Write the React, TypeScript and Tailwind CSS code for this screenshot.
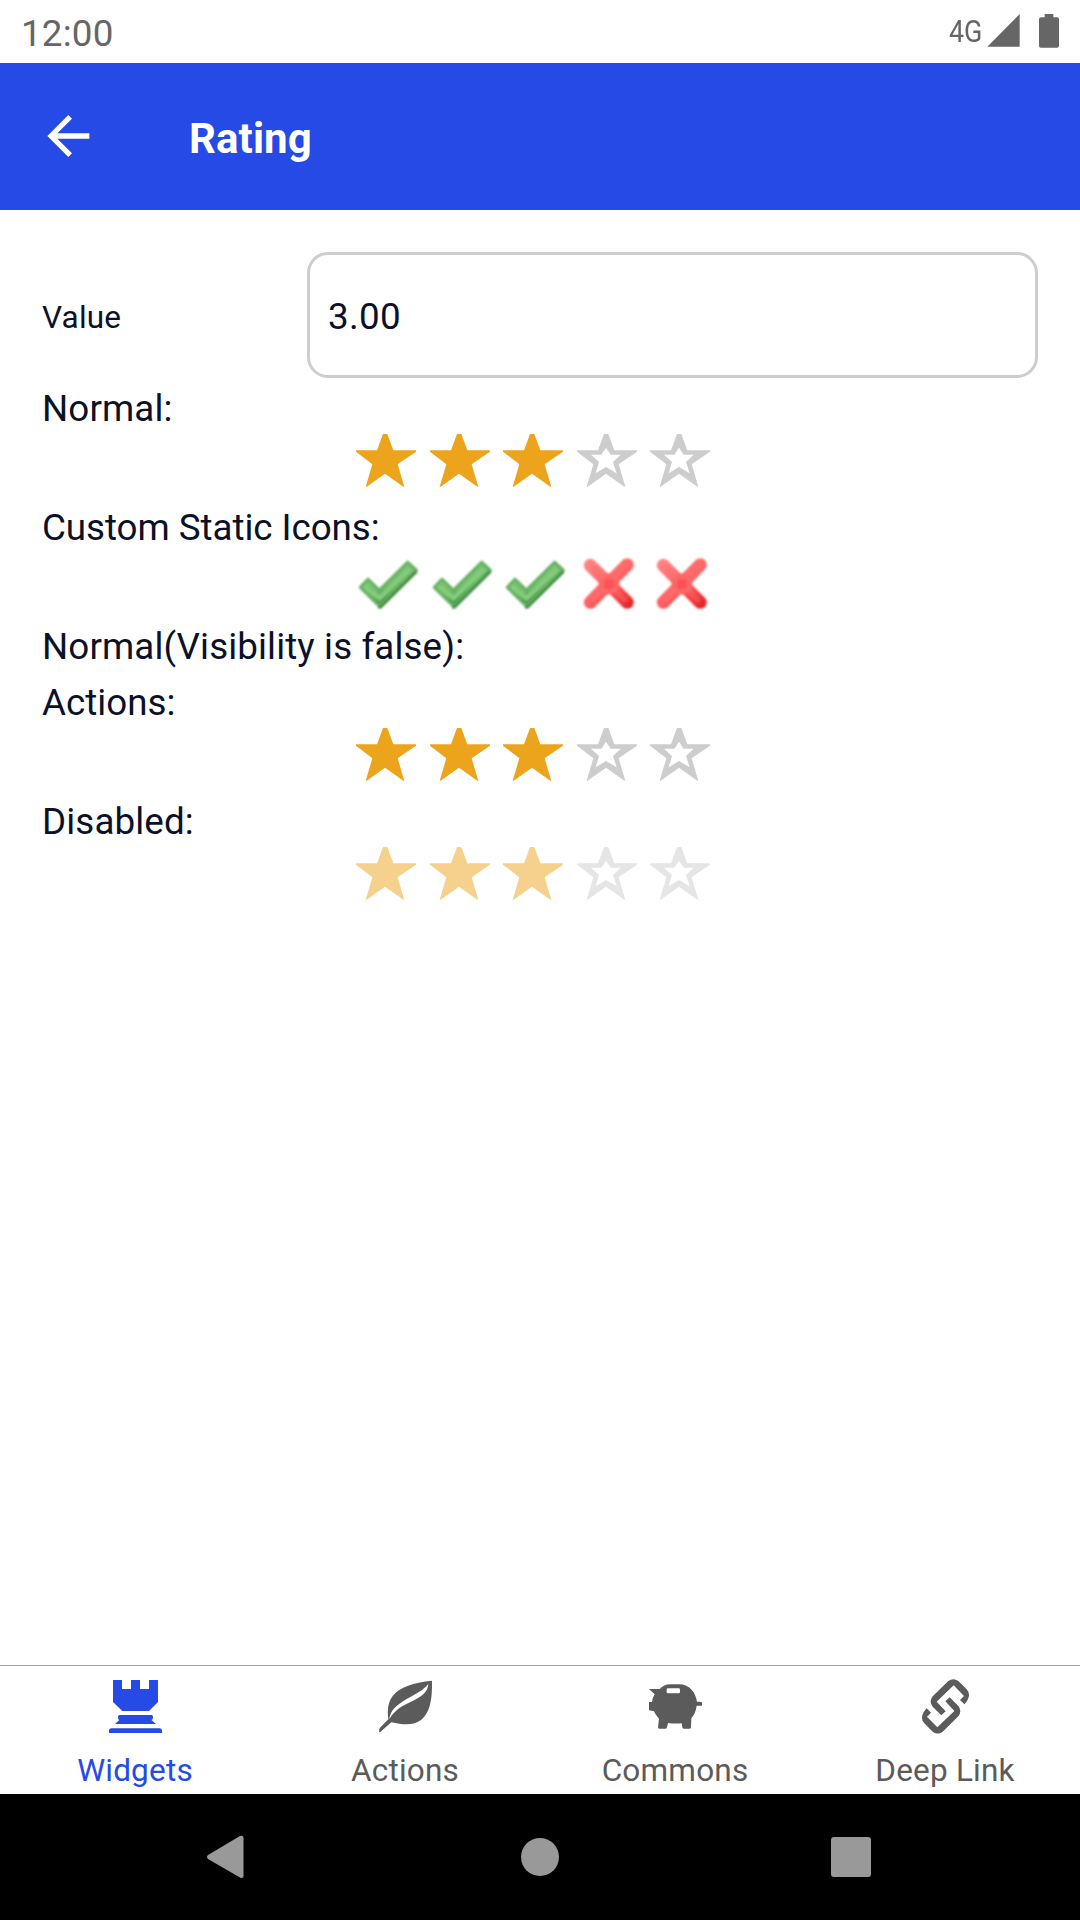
import React from 'react';

const STAR_OUTER = 'M81 0H94L112 49H180V53L125 91L145 158H142L87 119L32 158H29L49 91L0 53V49H63Z';
const STAR_HOLE = 'M87 41L101 62H131L108 84L119 118L87 99L56 118L66 84L42 62H73Z';
const LINK_HALF =
  'M1084 196L1058 170Q1046 156 1058 139L1105 93Q1120 82 1135 93L1160 118Q1177 137 1153 163L1140 150L1152 138L1121 106L1070 155L1097 184Z';

function Star({ filled }: { filled: boolean }) {
  return (
    <svg className="h-[53px] w-[60px]" viewBox="0 0 180 159" fill={filled ? '#eda41d' : '#cdcdcd'}>
      <path fillRule="evenodd" d={filled ? STAR_OUTER : STAR_OUTER + STAR_HOLE} />
    </svg>
  );
}

function Tick() {
  return (
    <svg className="h-[63px] w-[63px] blur-[1px]" viewBox="48 24 189 189">
      <defs>
        <linearGradient id="tick" x1="0.3" y1="0.3" x2="0.6" y2="0.8">
          <stop offset="0" stopColor="#7cc576" />
          <stop offset="0.55" stopColor="#74bd6d" />
          <stop offset="1" stopColor="#3f8f40" />
        </linearGradient>
      </defs>
      <path d="M60 127L84 102L118 135L203 51L230 76L120 186Z" fill="#66b062" stroke="#66b062" strokeWidth="8" strokeLinejoin="round" />
      <path d="M66 126L84 108L118 142L203 58L222 75L119 176Z" fill="url(#tick)" />
      <path d="M74 124L119 160L209 72" fill="none" stroke="#83cc7b" strokeWidth="14" />
      <path d="M114 187L122 187L230 80" fill="none" stroke="#3a853a" strokeWidth="7" />
    </svg>
  );
}

function Cross() {
  return (
    <svg className="h-[63px] w-[63px] blur-[1px]" viewBox="711 24 189 189">
      <defs>
        <linearGradient id="cross" gradientUnits="userSpaceOnUse" x1="750" y1="50" x2="860" y2="185">
          <stop offset="0" stopColor="#ff8383" />
          <stop offset="0.55" stopColor="#fd6263" />
          <stop offset="1" stopColor="#e8262a" />
        </linearGradient>
      </defs>
      <path d="M751 61L862 172M862 59L751 172" stroke="url(#cross)" strokeWidth="39" strokeLinecap="round" />
      <path d="M776 100L807 84L838 100V134L807 150L776 134Z" fill="#fd6667" />
      <path d="M754 64L859 169M859 62L754 169" stroke="#ff6e6e" strokeOpacity="0.4" strokeWidth="16" />
      <rect x="793" y="103" width="28" height="28" fill="#fb5154" />
    </svg>
  );
}

function Label({ children, tracking = '' }: { children: React.ReactNode; tracking?: string }) {
  return <p className={`h-14 pt-[9px] text-[36.75px] leading-[44px] whitespace-nowrap ${tracking}`}>{children}</p>;
}

function Rating({ custom = false, disabled = false }: { custom?: boolean; disabled?: boolean }) {
  return (
    <div className={`flex h-[63px] gap-[13.5px] pl-[314px] ${disabled ? 'opacity-50' : ''}`}>
      {[1, 2, 3, 4, 5].map((n) => (
        <div key={n} className="w-[60px] shrink-0">
          {custom ? <div className="w-[63px]">{n <= 3 ? <Tick /> : <Cross />}</div> : <Star filled={n <= 3} />}
        </div>
      ))}
    </div>
  );
}

function Tab({ label, color, viewBox, children }: { label: string; color: string; viewBox: string; children: React.ReactNode }) {
  return (
    <div className={`flex flex-1 flex-col items-center pt-[12px] ${color}`}>
      <svg className="h-[56px] w-[54px]" viewBox={viewBox} fill="currentColor">
        {children}
      </svg>
      <span className="mt-[18px] text-[31.5px] leading-[38px] tracking-[0.2px] whitespace-nowrap">{label}</span>
    </div>
  );
}

export default function App() {
  return (
    <div className="flex h-[1920px] w-[1080px] flex-col overflow-hidden bg-white font-['Roboto',sans-serif] text-[#0a1128]">
      <div className="flex h-[63px] shrink-0 items-start justify-between pl-[21px] text-[#666666]">
        <span className="pt-[12px] text-[36.75px] leading-[44px] tracking-[0.2px]">12:00</span>
        <div className="flex">
          <span className="w-[38px] origin-left scale-x-[0.84] pt-[12px] text-[32px] leading-[38px]">4G</span>
          <svg className="h-[63px] w-[93px]" viewBox="261 0 279 189" fill="currentColor">
            <path d="M262 140L359 42V140Z" />
            <path d="M434 42H460V52H471Q477 52 477 58V137Q477 143 471 143H423Q417 143 417 137V58Q417 52 423 52H434Z" />
          </svg>
        </div>
      </div>

      <header className="flex h-[147px] shrink-0 items-center bg-[#254ae6] pl-[47px] text-white">
        <svg className="mb-px h-[42px] w-[43px]" viewBox="142 346 129 126" fill="currentColor">
          <path d="M143 409L206 346L217 357L173 401H269V417H173L217 461L206 472Z" />
        </svg>
        <h1 className="ml-[99px] pt-[4px] text-[42px] leading-[50px] font-bold tracking-[0.1px]">Rating</h1>
      </header>

      <main className="flex-1 px-[42px] pt-[42px]">
        <div className="flex h-[126px] items-center">
          <span className="w-[265px] pt-[6px] text-[31.5px] tracking-[0.2px]">Value</span>
          <div className="flex h-full flex-1 items-center rounded-[21px] border-[3px] border-[#cdcdcd] pt-[3px] pl-[18px] text-[36.75px] tracking-[0.3px]">
            3.00
          </div>
        </div>
        <Label tracking="tracking-[0.12px]">Normal:</Label>
        <Rating />
        <Label tracking="tracking-[-0.05px]">Custom Static Icons:</Label>
        <Rating custom />
        <Label tracking="tracking-[0.12px]">Normal(Visibility is false):</Label>
        <Label>Actions:</Label>
        <Rating />
        <Label tracking="tracking-[0.12px]">Disabled:</Label>
        <Rating disabled />
      </main>

      <nav className="flex h-[129px] shrink-0 border-t border-[#a3a3a3]">
        <Tab label="Widgets" color="text-[#254ae6]" viewBox="144 84 162 168">
          <path d="M159 90H186V117H213V90H240V117H267V90H294V156L267 183H187L159 156Z" />
          <path d="M177 195H276Q279 196 279 203Q279 208 274 210L288 222H165L178 210Q174 208 174 203Q174 197 177 195Z" />
          <path d="M153 235H300Q306 236 306 241V249H147V241Q147 236 153 235Z" />
        </Tab>
        <Tab label="Actions" color="text-[#5b5b5b]" viewBox="954 84 162 168">
          <path
            fillRule="evenodd"
            d="M1116 92C1060 98 1020 110 998 138C984 156 981 180 985 208L960 233Q956 239 958 247Q961 247 965 242L994 217C1030 225 1062 228 1086 208C1110 184 1117 150 1116 92ZM988 207C990 182 1010 165 1040 147C1072 130 1090 120 1105 102C1104 124 1090 138 1050 157C1015 173 1004 184 988 207Z"
          />
        </Tab>
        <Tab label="Commons" color="text-[#5b5b5b]" viewBox="204 84 162 168">
          <path
            fillRule="evenodd"
            d="M207 117H239Q252 103 270 103H298C328 103 347 127 351 155H360V156H366V167H350C348 184 341 197 334 205L333 232Q333 236 329 236H311Q307 236 307 232L305 220Q284 222 264 219L261 232Q260 236 257 236H238Q234 236 234 232L237 206C230 199 226 192 222 184L207 181V156H216Q218 142 224 133ZM264 115Q260 115 260 119V126Q260 130 264 130H296Q300 130 300 126V119Q300 115 296 115Z"
          />
        </Tab>
        <Tab label="Deep Link" color="text-[#5b5b5b]" viewBox="1014 84 162 168">
          <path d={LINK_HALF} />
          <path d={LINK_HALF} transform="rotate(180 1096.5 169)" />
        </Tab>
      </nav>

      <div className="flex h-[126px] shrink-0 items-center bg-black pl-[206px] text-[#999999]">
        <svg className="h-[44px] w-[38px]" viewBox="0 0 38 44" fill="currentColor">
          <path d="M34 1Q37.500 0 37.500 3V41Q37.500 44 34 42.500L2 24Q0 22 2 20Z" />
        </svg>
        <div className="ml-[277px] h-[38px] w-[38px] rounded-full bg-[#999999]" />
        <div className="ml-[272px] h-[40px] w-[40px] rounded-[3px] bg-[#999999]" />
      </div>
    </div>
  );
}
